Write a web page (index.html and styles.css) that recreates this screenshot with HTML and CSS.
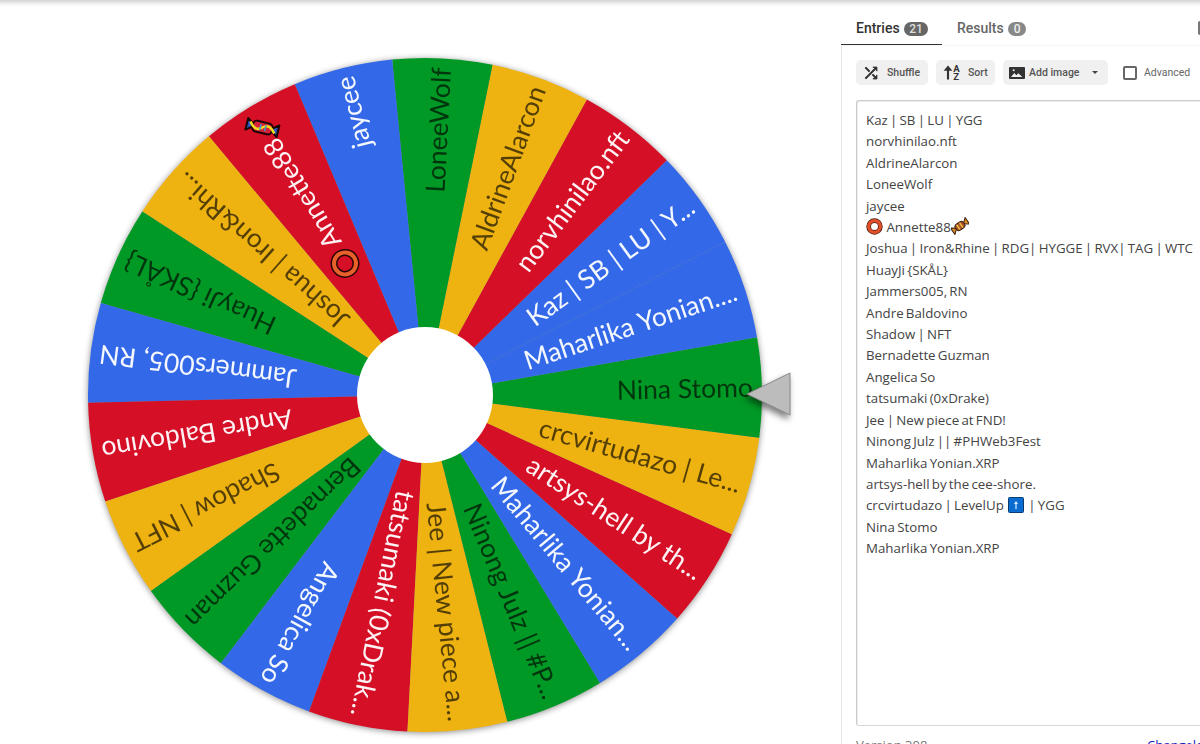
FILE: index.html
```html
<!DOCTYPE html>
<html lang="en">
<head>
    <meta charset="UTF-8">
    <title>Wheel of Names</title>
    <link rel="stylesheet" href="styles.css">
</head>
<body>
    <div class="page">
        <main class="wheel-area">
            <div class="wheel-box">
                <svg id="wheel" class="wheel" viewBox="0 0 690 690" width="690" height="690"></svg>
                <svg class="pointer" viewBox="0 0 48 52" width="48" height="52">
                    <path d="M2 23 L45 2 L45 44 Z" fill="#bcbcbc" stroke="#8a8a8a" stroke-width="1"/>
                </svg>
            </div>
        </main>

        <aside class="side">
            <div class="tabs">
                <div class="tab tab-active">Entries <span class="badge">21</span></div>
                <div class="tab">Results <span class="badge badge-light">0</span></div>
                <div class="tab-edge"></div>
            </div>
            <div class="card">
                <div class="toolbar">
                    <button class="btn btn-shuffle">
                        <svg class="icon-shuffle" viewBox="0 0 24 24" width="18" height="18"><path d="M10.59 9.17 5.41 4 4 5.41l5.17 5.17zM14.5 4l2.04 2.04L4 18.59 5.41 20 17.96 7.46 20 9.5V4zm.33 9.41-1.41 1.41 3.13 3.13L14.5 20H20v-5.5l-2.04 2.04z"/></svg>
                        Shuffle
                    </button>
                    <button class="btn btn-sort">
                        <svg viewBox="0 0 24 24" width="21" height="21"><path d="M8 4 3 10h3.800v10h2.400V10H13z"/><text x="14" y="11" class="sort-text">A</text><text x="14" y="21" class="sort-text">Z</text></svg>
                        Sort
                    </button>
                    <button class="btn btn-image">
                        <svg viewBox="0 0 24 24" width="16" height="16"><rect x="0" y="3" width="24" height="18" rx="1.500"/><path d="M3 18l5-6 3 3.500 3-3 6 5.500z" fill="#f0f0f0"/><circle cx="7" cy="8" r="1.500" fill="#f0f0f0"/></svg>
                        Add image
                        <span class="caret"></span>
                    </button>
                    <label class="advanced"><span class="check"></span>Advanced</label>
                </div>
                <div class="entries">
                    <div>Kaz | SB | LU | YGG</div>
                    <div>norvhinilao.nft</div>
                    <div>AldrineAlarcon</div>
                    <div>LoneeWolf</div>
                    <div>jaycee</div>
                    <div class="annette"><svg class="emoji emoji-ring" viewBox="0 0 16 16"><circle cx="8" cy="8" r="5.500" fill="none" stroke="#4a1a10" stroke-width="4.400"/><circle cx="8" cy="8" r="5.500" fill="none" stroke="#e0502a" stroke-width="3"/></svg> Annette88<svg class="emoji emoji-candy" viewBox="0 0 18 18"><g transform="rotate(-35 9 9)"><path d="M0 5 L5 9 L0 13 Z" fill="#d89020" stroke="#3a1a10"/><path d="M18 5 L13 9 L18 13 Z" fill="#d89020" stroke="#3a1a10"/><rect x="4" y="5.500" width="10" height="7" rx="3" fill="#a8502a" stroke="#3a1a10"/><path d="M7 6v6M10.500 6v6" stroke="#f0c040" stroke-width="1.500"/></g></svg></div>
                    <div>Joshua | Iron&amp;Rhine | RDG| HYGGE | RVX| TAG | WTC</div>
                    <div>HuayJi {SKÅL}</div>
                    <div>Jammers005, RN</div>
                    <div>Andre Baldovino</div>
                    <div>Shadow | NFT</div>
                    <div>Bernadette Guzman</div>
                    <div>Angelica So</div>
                    <div>tatsumaki (0xDrake)</div>
                    <div>Jee | New piece at FND!</div>
                    <div>Ninong Julz || #PHWeb3Fest</div>
                    <div>Maharlika Yonian.XRP</div>
                    <div>artsys-hell by the cee-shore.</div>
                    <div>crcvirtudazo | LevelUp <svg class="emoji emoji-up" viewBox="0 0 16 16"><rect x="0.500" y="0.500" width="15" height="15" rx="1" fill="#0a6ccf" stroke="#0a3a70"/><path d="M8 4 L6 7 H7.400 V12 H8.600 V7 H10 Z" fill="#dcecff"/></svg> | YGG</div>
                    <div>Nina Stomo</div>
                    <div>Maharlika Yonian.XRP</div>
                </div>
                <div class="card-foot">
                    <span>Version 308</span>
                    <a class="changelog">Changelog</a>
                </div>
            </div>
        </aside>
    </div>
    <script src="wheel.js"></script>
</body>
</html>
```

FILE: styles.css
```css
html, body {
    margin: 0;
    padding: 0;
    height: 744px;
    overflow: hidden;
    background-color: #fff;
}

.page {
    display: flex;
    width: 1200px;
    height: 744px;
    overflow: hidden;
    background: linear-gradient(#d4d4d4, #f4f4f4 60%, #fff) 0 0 / 100% 7px no-repeat;
}

.wheel-area {
    width: 841px;
    flex: none;
    padding: 50px 0 0 80px;
    box-sizing: border-box;
}

.wheel-box {
    position: relative;
    width: 690px;
    height: 690px;
}

.wheel {
    display: block;
    overflow: visible;
    filter: drop-shadow(0 1px 3px rgba(0, 0, 0, 0.45));
}

.wheel text {
    font-family: "Lato", sans-serif;
    font-size: 26.500px;
}

.pointer {
    position: absolute;
    left: 665px;
    top: 321px;
    overflow: visible;
    filter: drop-shadow(-2px 4px 3px rgba(0, 0, 0, 0.5));
}

.side {
    flex: 1;
    min-width: 0;
    padding-top: 12px;
    font-family: Roboto, sans-serif;
}

.tabs {
    display: flex;
    height: 33px;
    position: relative;
}

.tab {
    width: 101px;
    padding: 0 0 0 15px;
    box-sizing: border-box;
    font-size: 14px;
    font-weight: 500;
    line-height: 32px;
    color: #666;
}

.tab-active {
    color: #333;
    border-bottom: 1.500px solid #333;
    height: 33px;
}

.tab-edge {
    position: absolute;
    left: 357px;
    top: 9px;
    width: 4px;
    height: 14px;
    background-color: #777;
    border-radius: 2px 0 0 2px;
}

.badge {
    display: inline-block;
    min-width: 14px;
    padding: 0 5px;
    height: 14px;
    margin-left: 1px;
    line-height: 14px;
    border-radius: 7px;
    background-color: #666;
    color: #ddd;
    font-size: 12px;
    text-align: center;
    vertical-align: 0;
}

.badge-light {
    min-width: 8px;
    background-color: #888;
    color: #eee;
}

.card {
    border-left: 1px solid #e8e8e8;
    border-top: 1px solid #f6f6f6;
    height: 700px;
    padding: 14px 0 0 14px;
    box-sizing: border-box;
    width: 400px;
}

.toolbar {
    display: flex;
    align-items: center;
    gap: 8px;
    height: 25px;
}

.btn {
    display: flex;
    align-items: center;
    height: 25px;
    padding: 0;
    border: none;
    border-radius: 5px;
    background-color: #f0f0f0;
    color: #555;
    font-family: Roboto, sans-serif;
    font-size: 10.500px;
    font-weight: 500;
    box-sizing: border-box;
}

.btn svg {
    fill: #333;
    flex: none;
}

.btn .icon-shuffle {
    stroke: #333;
    stroke-width: 1;
}

.btn-shuffle {
    width: 72px;
    padding-left: 6px;
    gap: 7px;
}

.btn-sort {
    width: 59px;
    padding-left: 5px;
    gap: 6px;
}

.btn-image {
    width: 105px;
    padding-left: 6px;
    gap: 4px;
}

.sort-text {
    font-family: Roboto, sans-serif;
    font-size: 11px;
    font-weight: 700;
}

.caret {
    width: 0;
    height: 0;
    margin-left: 9px;
    border-left: 3.500px solid transparent;
    border-right: 3.500px solid transparent;
    border-top: 3.500px solid #444;
}

.advanced {
    display: flex;
    align-items: center;
    gap: 7px;
    margin-left: 7px;
    font-size: 10.500px;
    color: #666;
}

.check {
    width: 10px;
    height: 10px;
    border: 2px solid #666;
    border-radius: 2px;
}

.entries {
    width: 400px;
    height: 626px;
    margin-top: 15px;
    padding: 9px 0 0 9px;
    box-sizing: border-box;
    border: 1px solid #d8d8d8;
    border-top-color: #ccc;
    border-left-color: #ccc;
    border-radius: 3px;
    box-shadow: inset 1px 1px 1px rgba(0, 0, 0, 0.08);
    font-family: "Open Sans", sans-serif;
    font-size: 13.300px;
    line-height: 21.400px;
    word-spacing: -1.200px;
    color: #444;
    white-space: nowrap;
}

.annette {
    word-spacing: 0;
}

.emoji {
    display: inline-block;
    vertical-align: -3px;
}

.emoji-ring {
    width: 17px;
    height: 17px;
}

.emoji-candy {
    width: 18px;
    height: 18px;
}

.emoji-up {
    width: 16px;
    height: 16px;
    margin: 0 2px;
}

.card-foot {
    display: flex;
    justify-content: space-between;
    width: 355px;
    margin-top: 10px;
    font-family: "Open Sans", sans-serif;
    font-size: 13px;
    color: #777;
}

.changelog {
    color: #2222bb;
}
```

FILE: wheel.js
```js
// list order is counter-clockwise on the wheel, Nina Stomo sits at the pointer
const labels = [
    "Kaz | SB | LU | Y...", "norvhinilao.nft", "AldrineAlarcon", "LoneeWolf", "jaycee",
    "Annette88", "Joshua | Iron&Rhi...", "HuayJi {SKÅL}", "Jammers005, RN", "Andre Baldovino",
    "Shadow | NFT", "Bernadette Guzman", "Angelica So", "tatsumaki (0xDrak...", "Jee | New piece a...",
    "Ninong Julz || #P...", "Maharlika Yonian...", "artsys-hell by th...", "crcvirtudazo | Le...",
    "Nina Stomo", "Maharlika Yonian...."
];
const palette = ["#009925", "#eeb211", "#d50f25", "#3369e8"];
const NS = "http://www.w3.org/2000/svg";
const cx = 345, cy = 345, r = 337, hub = 68;
const step = 360 / labels.length;
const startAngle = -1.3;
const wheel = document.getElementById("wheel");

function add(parent, tag, attrs) {
    const el = document.createElementNS(NS, tag);
    for (const k in attrs) el.setAttribute(k, attrs[k]);
    parent.appendChild(el);
    return el;
}

function point(deg, radius) {
    const a = deg * Math.PI / 180;
    return (cx + radius * Math.cos(a)).toFixed(2) + " " + (cy + radius * Math.sin(a)).toFixed(2);
}

function drawCandy(group) {
    const g = add(group, "g", { transform: "translate(" + (cx + 313) + " " + cy + ") rotate(-45)" });
    add(g, "path", { d: "M-16 -6 L-8 0 L-16 6 Z M16 -6 L8 0 L16 6 Z", fill: "#2a55c0", stroke: "#1a0505", "stroke-width": 2, "stroke-linejoin": "round" });
    add(g, "rect", { x: -10, y: -5.5, width: 20, height: 11, rx: 4, fill: "#d5203a", stroke: "#1a0505", "stroke-width": 2 });
    add(g, "path", { d: "M-13 -3 Q-6 6 0 0 T13 3", fill: "none", stroke: "#f2dc20", "stroke-width": 2.500 });
    add(g, "path", { d: "M-3 -3v6M2 -3v6", stroke: "#38a0d0", "stroke-width": 1.500 });
}

function drawRing(group) {
    add(group, "circle", { cx: cx + 154, cy: cy, r: 11, fill: "none", stroke: "#2a0505", "stroke-width": 7 });
    add(group, "circle", { cx: cx + 154, cy: cy, r: 11, fill: "none", stroke: "#e8602a", "stroke-width": 4 });
}

labels.forEach((label, i) => {
    // clockwise offset from the pointer
    const off = (19 - i + 21) % 21;
    const angle = startAngle + off * step;
    // the last entry wraps round next to another blue slice
    const color = i === 20 ? palette[3] : palette[off % 4];
    const dark = color === palette[0] || color === palette[1];

    add(wheel, "path", {
        d: "M" + cx + " " + cy + " L" + point(angle - step / 2, r) +
           " A" + r + " " + r + " 0 0 1 " + point(angle + step / 2, r) + " Z",
        fill: color
    });

    const group = add(wheel, "g", { transform: "rotate(" + angle.toFixed(2) + " " + cx + " " + cy + ")" });
    const text = add(group, "text", {
        x: cx + (i === 5 ? 298 : 328),
        y: cy + 9,
        "text-anchor": "end",
        fill: dark ? "#000" : "#fff",
        "fill-opacity": dark ? 0.65 : 0.95
    });
    text.textContent = label;

    if (i === 5) {
        drawRing(group);
        drawCandy(group);
    }
});

add(wheel, "circle", { cx: cx, cy: cy, r: hub, fill: "#fff" });
```
